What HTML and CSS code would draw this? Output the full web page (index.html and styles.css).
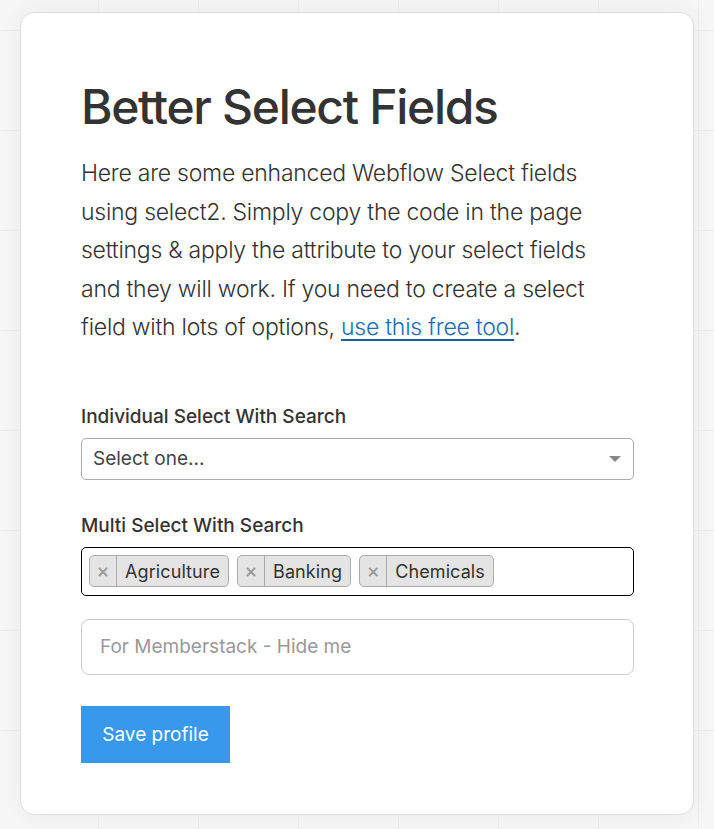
FILE: index.html
```html
<!DOCTYPE html>
<html>
<head>
<meta charset="utf-8">
<link rel="stylesheet" href="styles.css">
</head>
<body>
<div class="page">
  <div class="card">
    <h1 class="title">Better Select Fields</h1>
    <p class="intro">Here are some enhanced Webflow Select fields using select2. Simply copy the code in the page settings &amp; apply the attribute to your select fields and they will work. If you need to create a select field with lots of options, <a class="link" href="#">use this free tool</a>.</p>
    <form class="form">
      <label class="label">Individual Select With Search</label>
      <div class="select">
        <span class="select-text">Select one...</span>
        <span class="arrow"></span>
      </div>
      <label class="label label-multi">Multi Select With Search</label>
      <div class="multi">
        <span class="tag"><span class="tag-x">×</span><span class="tag-text">Agriculture</span></span>
        <span class="tag"><span class="tag-x">×</span><span class="tag-text">Banking</span></span>
        <span class="tag"><span class="tag-x">×</span><span class="tag-text">Chemicals</span></span>
      </div>
      <div class="input">For Memberstack - Hide me</div>
      <div class="button">Save profile</div>
    </form>
  </div>
</div>
</body>
</html>
```
FILE: styles.css
```css
html, body {
  margin: 0;
  padding: 0;
}
body {
  background-color: #f6f6f6;
  background-image:
    linear-gradient(to right, #ededed 1px, transparent 1px),
    linear-gradient(to bottom, #ededed 1px, transparent 1px);
  background-size: 100px 100px;
  background-position: 98px 30px;
  font-family: Inter, "Noto Sans", sans-serif;
  color: #333;
  width: 714px;
  height: 829px;
  overflow: hidden;
}
.page {
  padding: 12px 20px 0 20px;
}
.card {
  box-sizing: border-box;
  width: 674px;
  height: 803px;
  background: #fff;
  border: 1px solid #dedede;
  border-radius: 14px;
  box-shadow: 0 0 24px rgba(0,0,0,0.05);
  padding: 64px 60px 0 60px;
}
.title {
  margin: 0;
  font-size: 48px;
  font-weight: 500;
  line-height: 60px;
  letter-spacing: -1.3px;
  color: #333;
}
.intro {
  margin: 17px 0 0 0;
  width: 548px;
  font-size: 23px;
  font-weight: 300;
  line-height: 38.5px;
  letter-spacing: -0.25px;
  color: #333;
}
.link {
  color: #1b6db3;
  text-decoration: underline;
  text-decoration-color: #1a5f9c;
  text-underline-offset: 4px;
  text-decoration-thickness: 2px;
}
.form {
  margin-top: 58px;
  display: flex;
  flex-direction: column;
  align-items: flex-start;
}
.label {
  font-size: 19px;
  font-weight: 500;
  line-height: 24px;
  color: #333;
  margin-bottom: 9px;
}
.label-multi {
  margin-top: 34px;
}
.select {
  box-sizing: border-box;
  width: 553px;
  height: 42px;
  border: 1px solid #aaa;
  border-radius: 5px;
  display: flex;
  align-items: center;
  justify-content: space-between;
  padding: 0 12px 0 11px;
}
.select-text {
  font-size: 19px;
  font-weight: 400;
  color: #444;
}
.arrow {
  width: 0;
  height: 0;
  border-left: 6px solid transparent;
  border-right: 6px solid transparent;
  border-top: 6px solid #888;
}
.multi {
  box-sizing: border-box;
  width: 553px;
  height: 49px;
  border: 1px solid #000;
  border-radius: 5px;
  display: flex;
  align-items: center;
  gap: 8px;
  padding: 0 7px;
}
.tag {
  box-sizing: border-box;
  height: 32px;
  display: flex;
  align-items: stretch;
  background: #e4e4e4;
  border: 1px solid #aaa;
  border-radius: 5px;
}
.tag-x {
  width: 26px;
  display: flex;
  align-items: center;
  justify-content: center;
  border-right: 1px solid #aaa;
  color: #999;
  font-weight: 700;
  font-size: 16px;
  font-family: "DejaVu Sans", sans-serif;
}
.tag-text {
  display: flex;
  align-items: center;
  padding: 0 8px 0 8px;
  font-size: 18px;
  font-weight: 400;
  letter-spacing: 0.1px;
  color: #333;
}
.input {
  box-sizing: border-box;
  width: 553px;
  height: 56px;
  margin-top: 23px;
  border: 1px solid #ccc;
  border-radius: 8px;
  display: flex;
  align-items: center;
  padding: 0 18px;
  font-size: 19px;
  font-weight: 400;
  color: #999;
}
.button {
  margin-top: 31px;
  box-sizing: border-box;
  width: 149px;
  height: 57px;
  background: #3898ec;
  color: #fff;
  font-size: 19px;
  font-weight: 400;
  display: flex;
  align-items: center;
  justify-content: center;
}
```
